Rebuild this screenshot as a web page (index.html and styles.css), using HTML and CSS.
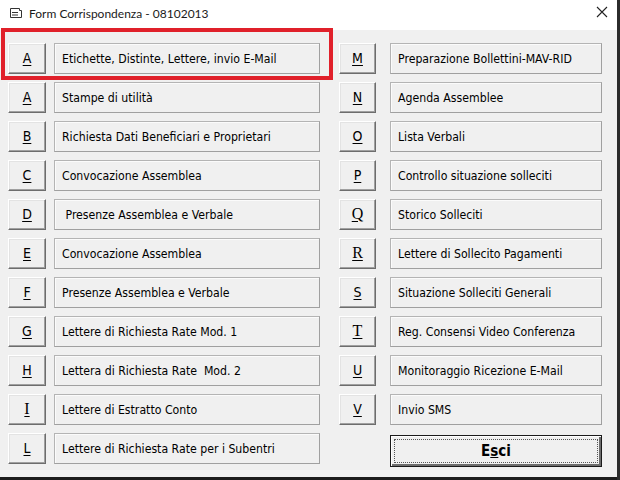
FILE: index.html
```html
<!DOCTYPE html>
<html lang="it">

<head>
    <meta charset="UTF-8">
    <meta name="viewport" content="width=device-width, initial-scale=1.0">
    <title>Form Corrispondenza</title>
    <link rel="stylesheet" href="styles.css">
</head>

<body>
    <div class="window">
        <div class="title-bar">
            <svg class="app-icon" width="14" height="12" viewBox="0 0 14 12">
                <path d="M1.5 1.5h9v2h2v7h-11z" fill="#fff" stroke="#333" stroke-width="1"/>
                <path d="M3 5.5h6M3 8h6" stroke="#333" stroke-width="1"/>
            </svg>
            <span class="title">Form Corrispondenza - 08102013</span>
            <svg class="close" width="12" height="12" viewBox="0 0 12 12">
                <path d="M1 1L11 11M11 1L1 11" stroke="#222" stroke-width="1.1"/>
            </svg>
        </div>

        <div class="content">
            <div class="column left">
                <div class="row"><button class="key"><u>A</u></button><div class="label">Etichette, Distinte, Lettere, invio E-Mail</div></div>
                <div class="row"><button class="key"><u>A</u></button><div class="label">Stampe di utilità</div></div>
                <div class="row"><button class="key"><u>B</u></button><div class="label">Richiesta Dati Beneficiari e Proprietari</div></div>
                <div class="row"><button class="key"><u>C</u></button><div class="label">Convocazione Assemblea</div></div>
                <div class="row"><button class="key"><u>D</u></button><div class="label">&nbsp;Presenze Assemblea e Verbale</div></div>
                <div class="row"><button class="key"><u>E</u></button><div class="label">Convocazione Assemblea</div></div>
                <div class="row"><button class="key"><u>F</u></button><div class="label">Presenze Assemblea e Verbale</div></div>
                <div class="row"><button class="key"><u>G</u></button><div class="label">Lettere di Richiesta Rate Mod. 1</div></div>
                <div class="row"><button class="key"><u>H</u></button><div class="label">Lettera di Richiesta Rate &nbsp;Mod. 2</div></div>
                <div class="row"><button class="key"><u class="serif">I</u></button><div class="label">Lettere di Estratto Conto</div></div>
                <div class="row"><button class="key"><u>L</u></button><div class="label">Lettere di Richiesta Rate per i Subentri</div></div>
            </div>

            <div class="column right">
                <div class="row"><button class="key"><u>M</u></button><div class="label">Preparazione Bollettini-MAV-RID</div></div>
                <div class="row"><button class="key"><u>N</u></button><div class="label">Agenda Assemblee</div></div>
                <div class="row"><button class="key"><u>O</u></button><div class="label">Lista Verbali</div></div>
                <div class="row"><button class="key"><u>P</u></button><div class="label">Controllo situazione solleciti</div></div>
                <div class="row"><button class="key"><u class="serif">Q</u></button><div class="label">Storico Solleciti</div></div>
                <div class="row"><button class="key"><u class="serif">R</u></button><div class="label">Lettere di Sollecito Pagamenti</div></div>
                <div class="row"><button class="key"><u>S</u></button><div class="label">Situazione Solleciti Generali</div></div>
                <div class="row"><button class="key"><u class="serif">T</u></button><div class="label">Reg. Consensi Video Conferenza</div></div>
                <div class="row"><button class="key"><u>U</u></button><div class="label">Monitoraggio Ricezione E-Mail</div></div>
                <div class="row"><button class="key"><u>V</u></button><div class="label">Invio SMS</div></div>
                <div class="row"><button class="exit"><span class="focus">E<u>s</u>ci</span></button></div>
            </div>

            <div class="highlight"></div>
        </div>

        <div class="taskbar"></div>
    </div>
</body>

</html>
```

FILE: styles.css
```css
body {
    margin: 0;
    background-color: #ffffff;
}

.window {
    width: 620px;
    height: 480px;
    display: flex;
    flex-direction: column;
    background-color: #f0f0f0;
    box-sizing: border-box;
    border-right: 3px solid #2b2b2b;
    overflow: hidden;
}

.title-bar {
    height: 30px;
    flex: none;
    display: flex;
    align-items: center;
    background-color: #ffffff;
    padding-left: 9px;
    padding-right: 8px;
}

.app-icon {
    margin-right: 6px;
    margin-top: -4px;
}

.title {
    font-family: 'Lato', sans-serif;
    font-size: 12px;
    color: #1a1a1a;
    flex: 1;
    margin-top: -4px;
}

.close {
    margin-top: -6px;
    margin-right: 1px;
}

.content {
    position: relative;
    flex: 1;
    display: flex;
    padding: 13px 0 0 8px;
    gap: 19px;
}

.column {
    display: flex;
    flex-direction: column;
    gap: 8px;
}

.row {
    display: flex;
    height: 31px;
}

.left .row {
    gap: 8px;
}

.right .row {
    gap: 14px;
}

.key {
    width: 38px;
    height: 31px;
    padding: 0 0 2px 0;
    background-color: #f0f0f0;
    border: 1px solid;
    border-color: #ffffff #6d6d6d #6d6d6d #ffffff;
    box-shadow: inset -1px -1px 0 #a0a0a0, inset 1px 1px 0 #e3e3e3;
    font-family: 'DejaVu Sans Condensed', 'DejaVu Sans', sans-serif;
    font-size: 14px;
    color: #000000;
}

.right .key {
    width: 37px;
}

.key u {
    text-underline-offset: 2px;
}

.key .serif {
    font-family: 'Liberation Serif', serif;
    font-size: 16px;
}

.label {
    width: 266px;
    box-sizing: border-box;
    border: 1px solid;
    border-color: #b4b4b4 #a0a0a0 #a0a0a0 #b4b4b4;
    box-shadow: inset 1px 1px 0 #fbfbfb;
    display: flex;
    align-items: center;
    padding-left: 7px;
    font-family: 'DejaVu Sans Condensed', 'DejaVu Sans', sans-serif;
    font-size: 12.2px;
    color: #000000;
    white-space: pre;
}

.right .label {
    width: 212px;
}

.exit {
    margin-left: 51px;
    margin-top: 2px;
    width: 212px;
    height: 32px;
    padding: 3px;
    background-color: #f0f0f0;
    border: 1px solid #1a1a1a;
    box-shadow: inset 1px 1px 0 #ffffff, inset -2px -2px 0 #6d6d6d;
    font-family: 'DejaVu Sans Condensed', 'DejaVu Sans', sans-serif;
    font-size: 15px;
    font-weight: bold;
    color: #000000;
}

.focus {
    display: flex;
    align-items: center;
    justify-content: center;
    height: 100%;
    border: 1px dotted #555555;
    box-sizing: border-box;
}

.highlight {
    position: absolute;
    left: 1px;
    top: -2px;
    width: 332px;
    height: 52px;
    box-sizing: border-box;
    border: 4px solid #e0202a;
}

.taskbar {
    height: 3px;
    flex: none;
    background-color: #1c1c1c;
}
```
